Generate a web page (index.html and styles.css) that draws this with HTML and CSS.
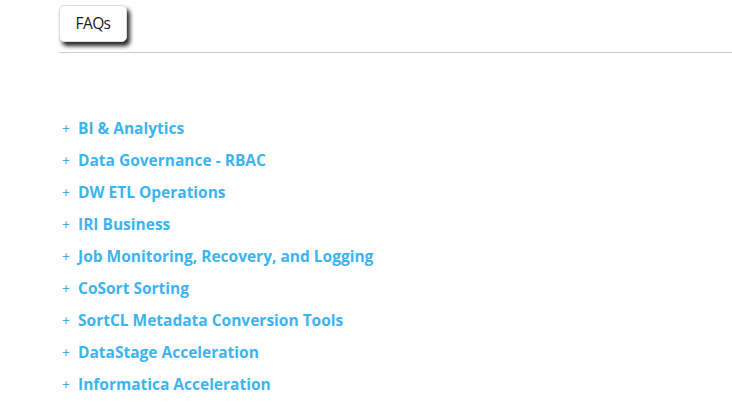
FILE: index.html
```html
<!DOCTYPE html>
<html>
<head>
<meta charset="utf-8">
<link rel="stylesheet" href="styles.css">
</head>
<body>
<div class="page">
  <div class="tabs">
    <div class="tab">FAQs</div>
  </div>
  <ul class="faq-list">
    <li><span class="plus">+</span><a href="#">BI &amp; Analytics</a></li>
    <li><span class="plus">+</span><a href="#">Data Governance - RBAC</a></li>
    <li><span class="plus">+</span><a href="#">DW ETL Operations</a></li>
    <li><span class="plus">+</span><a href="#">IRI Business</a></li>
    <li><span class="plus">+</span><a href="#">Job Monitoring, Recovery, and Logging</a></li>
    <li><span class="plus">+</span><a href="#">CoSort Sorting</a></li>
    <li><span class="plus">+</span><a href="#">SortCL Metadata Conversion Tools</a></li>
    <li><span class="plus">+</span><a href="#">DataStage Acceleration</a></li>
    <li><span class="plus">+</span><a href="#">Informatica Acceleration</a></li>
  </ul>
</div>
</body>
</html>
```
FILE: styles.css
```css
html, body {
  margin: 0;
  padding: 0;
  background: #fff;
  font-family: "Open Sans", "Noto Sans", sans-serif;
}
.page {
  padding-left: 59px;
}
.tabs {
  padding-top: 5px;
  height: 47px;
  border-bottom: 1px solid #cccccc;
}
.tab {
  display: inline-flex;
  align-items: center;
  justify-content: center;
  width: 68px;
  height: 37px;
  padding-bottom: 2px;
  box-sizing: border-box;
  border: 1px solid #dddddd;
  border-radius: 5px;
  background: #fff;
  box-shadow: 3px 4px 4px rgba(0, 0, 0, 0.85);
  font-size: 15.5px;
  color: #1a1a2e;
  letter-spacing: -0.6px;
}
.faq-list {
  list-style: none;
  margin: 0;
  padding: 59px 0 0 3px;
}
.faq-list li {
  display: flex;
  align-items: center;
  height: 32px;
}
.plus {
  width: 16px;
  color: #3aaee8;
  font-size: 14px;
  font-weight: 400;
}
.faq-list a {
  color: #3bb4ef;
  font-weight: 700;
  font-size: 15.5px;
  text-decoration: none;
  letter-spacing: 0;
}
```
